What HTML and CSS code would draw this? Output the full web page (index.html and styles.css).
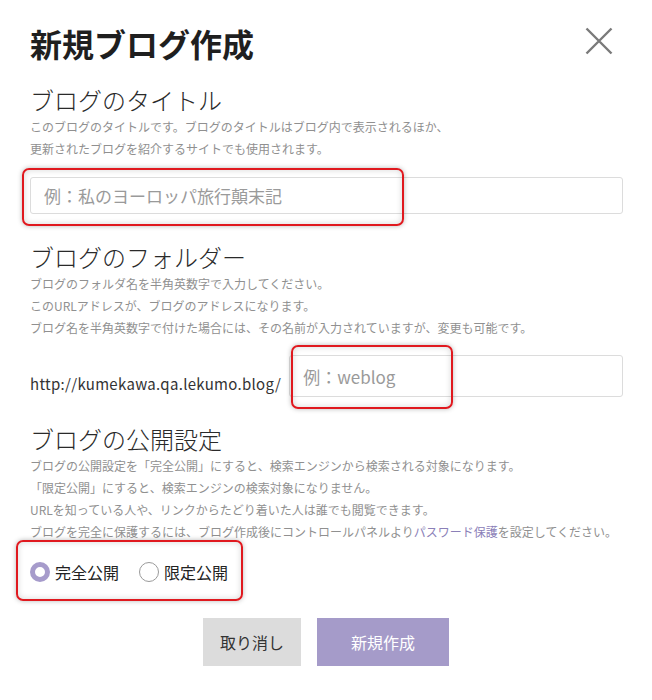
FILE: index.html
```html
<!DOCTYPE html>
<html lang="ja">
<head>
<meta charset="utf-8">
<title>新規ブログ作成</title>
<link rel="stylesheet" href="styles.css">
</head>
<body>
<div class="dialog">
  <div class="header">
    <h1 class="title">新規ブログ作成</h1>
    <button class="close" aria-label="閉じる">
      <svg width="28" height="28" viewBox="0 0 28 28"><path d="M1.5 1.5 L26.5 26.5 M26.5 1.5 L1.5 26.5" stroke="#7a7a7a" stroke-width="2.4" fill="none"/></svg>
    </button>
  </div>

  <section class="section s1">
    <h2 class="heading">ブログのタイトル</h2>
    <p class="desc">このブログのタイトルです。ブログのタイトルはブログ内で表示されるほか、<br>更新されたブログを紹介するサイトでも使用されます。</p>
    <div class="field">
      <input class="input input-title" type="text" placeholder="例：私のヨーロッパ旅行顛末記">
      <div class="mark mark1"></div>
    </div>
  </section>

  <section class="section s2">
    <h2 class="heading">ブログのフォルダー</h2>
    <p class="desc">ブログのフォルダ名を半角英数字で入力してください。<br>このURLアドレスが、ブログのアドレスになります。<br>ブログ名を半角英数字で付けた場合には、その名前が入力されていますが、変更も可能です。</p>
    <div class="url-row">
      <span class="url">http://kumekawa.qa.lekumo.blog/</span>
      <div class="field grow">
        <input class="input input-folder" type="text" placeholder="例：weblog">
        <div class="mark mark2"></div>
      </div>
    </div>
  </section>

  <section class="section s3">
    <h2 class="heading">ブログの公開設定</h2>
    <p class="desc">ブログの公開設定を「完全公開」にすると、検索エンジンから検索される対象になります。<br>「限定公開」にすると、検索エンジンの検索対象になりません。<br>URLを知っている人や、リンクからたどり着いた人は誰でも閲覧できます。<br>ブログを完全に保護するには、ブログ作成後にコントロールパネルより<span class="link">パスワード保護</span>を設定してください。</p>
    <div class="radios">
      <label class="radio"><span class="dot checked"></span><span class="rlabel">完全公開</span></label>
      <label class="radio"><span class="dot"></span><span class="rlabel">限定公開</span></label>
      <div class="mark mark3"></div>
    </div>
  </section>

  <div class="buttons">
    <button class="btn btn-cancel">取り消し</button>
    <button class="btn btn-create">新規作成</button>
  </div>
</div>
</body>
</html>
```
FILE: styles.css
```css
html, body {
  margin: 0;
  padding: 0;
  background: #ffffff;
}
body {
  font-family: "Noto Sans CJK JP", "Noto Sans", sans-serif;
  color: #222;
}
.dialog {
  width: 652px;
  box-sizing: border-box;
  padding: 23px 29px 0 30px;
}
.header {
  display: flex;
  align-items: center;
  justify-content: space-between;
  height: 40px;
}
.title {
  margin: 0;
  font-size: 32px;
  line-height: 40px;
  font-weight: 700;
  color: #1f1f1f;
}
.close {
  border: 0;
  background: none;
  padding: 0;
  margin: 0 10px 4px 0;
  width: 28px;
  height: 28px;
  display: flex;
}
.s1 { margin-top: 21px; }
.s2 { margin-top: 27px; }
.s3 { margin-top: 26px; }
.heading {
  margin: 0;
  font-family: "Noto Sans CJK JP Light", "Noto Sans CJK JP DemiLight", "Noto Sans CJK JP", sans-serif;
  font-size: 24px;
  line-height: 32px;
  font-weight: 300;
  color: #2a2a2a;
}
.desc {
  margin: 0;
  font-size: 12px;
  line-height: 22px;
  color: #909090;
}
.link { color: #8b80b8; }
.field {
  position: relative;
  margin-top: 17px;
}
.input {
  display: block;
  width: 100%;
  box-sizing: border-box;
  border: 1px solid #dcdcdc;
  border-radius: 3px;
  background: #fff;
  font-family: "Noto Sans CJK JP", "Noto Sans", sans-serif;
  font-size: 17px;
  color: #333;
  outline: none;
}
.input::placeholder { color: #9a9a9a; }
.input-title {
  height: 37px;
  padding: 0 13px;
}
.input-folder {
  height: 42px;
  padding: 0 13px;
}
.url-row {
  display: flex;
  align-items: center;
  margin-top: 16px;
}
.url {
  font-size: 15px;
  letter-spacing: 0.3px;
  color: #333;
  padding-top: 14px;
  white-space: nowrap;
}
.grow {
  flex: 1;
  margin-top: 0;
  margin-left: 8px;
}
.mark {
  position: absolute;
  border: 2px solid #e0191f;
  border-radius: 7px;
  box-sizing: border-box;
  box-shadow: 0 0 5px rgba(0,0,0,0.28), inset 0 0 6px rgba(0,0,0,0.16);
  pointer-events: none;
}
.mark1 { left: -8px; top: -9px; width: 382px; height: 58px; }
.mark2 { left: 2px; top: -10px; width: 162px; height: 64px; }
.radios {
  position: relative;
  display: flex;
  align-items: center;
  height: 40px;
  margin-top: 9px;
}
.mark3 { left: -14px; top: -12px; width: 227px; height: 61px; }
.radio {
  display: flex;
  align-items: center;
  margin-right: 20px;
}
.dot {
  width: 20px;
  height: 20px;
  box-sizing: border-box;
  border-radius: 50%;
  border: 1px solid #9a9a9a;
  background: #fff;
}
.dot.checked {
  border: 5px solid #a69bcb;
}
.rlabel {
  margin-left: 5px;
  font-size: 16px;
  color: #222;
}
.buttons {
  display: flex;
  justify-content: center;
  gap: 16px;
  margin-top: 26px;
  padding-right: 1px;
}
.btn {
  height: 48px;
  border: 0;
  border-radius: 0;
  font-family: "Noto Sans CJK JP", "Noto Sans", sans-serif;
  font-size: 16px;
  padding: 0;
}
.btn-cancel {
  width: 98px;
  background: #dcdcdc;
  color: #333;
}
.btn-create {
  width: 132px;
  background: #a59bc9;
  color: #fff;
}
```
